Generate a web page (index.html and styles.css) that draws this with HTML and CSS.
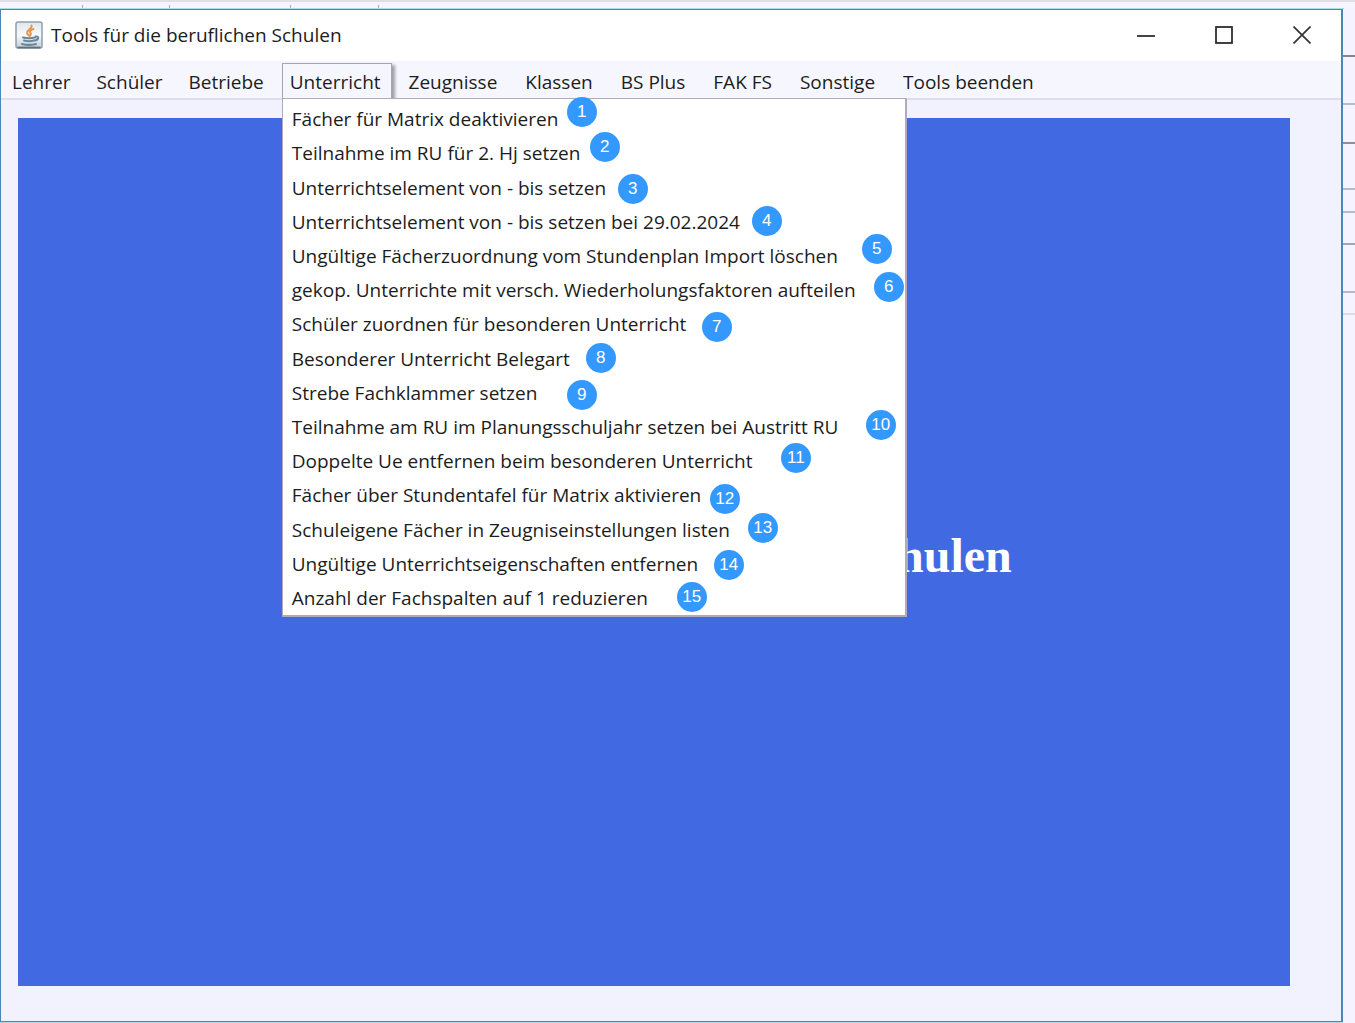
FILE: index.html
```html
<!DOCTYPE html>
<html lang="de">
<head>
<meta charset="utf-8">
<title>Tools für die beruflichen Schulen</title>
<link rel="stylesheet" href="styles.css">
</head>
<body>
<div class="desktop">
  <div class="strip-top"></div>
  <main class="window">
    <header class="titlebar">
      <svg class="app-icon" viewBox="0 0 28 28" aria-hidden="true">
        <defs>
          <linearGradient id="tile" x1="0" y1="0" x2="0" y2="1">
            <stop offset="0" stop-color="#dfe6eb"/>
            <stop offset=".5" stop-color="#f8fafb"/>
            <stop offset="1" stop-color="#c3ced6"/>
          </linearGradient>
        </defs>
        <rect x="1" y="1" width="26" height="26" rx="2" fill="url(#tile)" stroke="#8fa0ac" stroke-width="1.5"/>
        <path d="M2.500 26.500h23" stroke="#5d7180" stroke-width="1.800"/>
        <path d="M16.500 4.500c1 3.500-5 4.500-4.500 7.500.3 1.500 2 2 2.500 3M18.500 8c-3 1-4.500 2.500-3 4 1 1.200.2 2-.8 3" fill="none" stroke="#e8964a" stroke-width="2" stroke-linecap="round"/>
        <path d="M8 16.500c3 .8 9 .8 12 0M9 19.500c3 .8 7 .8 10 0M7 23c4 1 10 1 14 0M20.500 15.500c4-.8 3.500 3.500-1 4" fill="none" stroke="#6b879b" stroke-width="2" stroke-linecap="round"/>
      </svg>
      <span class="title">Tools für die beruflichen Schulen</span>
      <button class="control" aria-label="Minimieren"><svg viewBox="0 0 18 18"><path d="M0 10h18" stroke="#444" stroke-width="2"/></svg></button>
      <button class="control" aria-label="Maximieren"><svg viewBox="0 0 18 18"><rect x="1" y="1" width="16" height="16" fill="none" stroke="#222" stroke-width="1.700"/></svg></button>
      <button class="control" aria-label="Schließen"><svg viewBox="0 0 18 18"><path d="M.5.5l17 17M17.500.5L.5 17.500" stroke="#333" stroke-width="1.700"/></svg></button>
    </header>
    <nav class="menubar">
      <button class="menu">Lehrer</button>
      <button class="menu">Schüler</button>
      <button class="menu">Betriebe</button>
      <div class="menu-open">
        <button class="menu active" aria-expanded="true">Unterricht</button>
        <div class="dropdown">
          <button class="entry">Fächer für Matrix deaktivieren</button>
          <button class="entry">Teilnahme im RU für 2. Hj setzen</button>
          <button class="entry">Unterrichtselement von - bis setzen</button>
          <button class="entry">Unterrichtselement von - bis setzen bei 29.02.2024</button>
          <button class="entry">Ungültige Fächerzuordnung vom Stundenplan Import löschen</button>
          <button class="entry">gekop. Unterrichte mit versch. Wiederholungsfaktoren aufteilen</button>
          <button class="entry">Schüler zuordnen für besonderen Unterricht</button>
          <button class="entry">Besonderer Unterricht Belegart</button>
          <button class="entry">Strebe Fachklammer setzen</button>
          <button class="entry">Teilnahme am RU im Planungsschuljahr setzen bei Austritt RU</button>
          <button class="entry">Doppelte Ue entfernen beim besonderen Unterricht</button>
          <button class="entry">Fächer über Stundentafel für Matrix aktivieren</button>
          <button class="entry">Schuleigene Fächer in Zeugniseinstellungen listen</button>
          <button class="entry">Ungültige Unterrichtseigenschaften entfernen</button>
          <button class="entry">Anzahl der Fachspalten auf 1 reduzieren</button>
          <span class="badge b1">1</span>
          <span class="badge b2">2</span>
          <span class="badge b3">3</span>
          <span class="badge b4">4</span>
          <span class="badge b5">5</span>
          <span class="badge b6">6</span>
          <span class="badge b7">7</span>
          <span class="badge b8">8</span>
          <span class="badge b9">9</span>
          <span class="badge b10">10</span>
          <span class="badge b11">11</span>
          <span class="badge b12">12</span>
          <span class="badge b13">13</span>
          <span class="badge b14">14</span>
          <span class="badge b15">15</span>
        </div>
      </div>
      <button class="menu">Zeugnisse</button>
      <button class="menu">Klassen</button>
      <button class="menu">BS Plus</button>
      <button class="menu">FAK FS</button>
      <button class="menu">Sonstige</button>
      <button class="menu">Tools beenden</button>
    </nav>
    <section class="content">
      <div class="panel"><h1>Tools für die beruflichen Schulen</h1></div>
    </section>
  </main>
  <div class="strip-right"></div>
</div>
</body>
</html>
```
FILE: styles.css
```css
* { box-sizing: border-box; }

body {
  margin: 0;
  background: #f4f3ff;
  color: #1c1c1c;
  font-family: "Open Sans", "Noto Sans", sans-serif;
}

button {
  margin: 0;
  border: 0;
  padding: 0;
  background: none;
  color: inherit;
  font: inherit;
}

.desktop {
  display: grid;
  grid-template: 9px 1fr / 1fr 12px;
  min-height: 100vh;
}

/* Edges of the application behind the window */
.strip-top {
  grid-column: 1 / -1;
  background:
    linear-gradient(#a9a9b4, #a9a9b4) 82px 5px / 1px 4px no-repeat,
    linear-gradient(#a9a9b4, #a9a9b4) 169px 5px / 1px 4px no-repeat,
    linear-gradient(#a9a9b4, #a9a9b4) 290px 5px / 1px 4px no-repeat,
    linear-gradient(#a9a9b4, #a9a9b4) 378px 5px / 1px 4px no-repeat,
    linear-gradient(#dedde8, #dedde8) 0 0 / 100% 2px no-repeat,
    #f6f5ff;
}

.strip-right {
  background:
    linear-gradient(#85858f, #85858f) 0 46px / 100% 2px no-repeat,
    linear-gradient(#b5bace, #b5bace) 0 94px / 100% 2px no-repeat,
    linear-gradient(#8f8f99, #8f8f99) 0 133px / 100% 2px no-repeat,
    linear-gradient(#b5bace, #b5bace) 0 179px / 100% 2px no-repeat,
    linear-gradient(#b5bace, #b5bace) 0 202px / 100% 2px no-repeat,
    linear-gradient(#a2a7bb, #a2a7bb) 0 234px / 100% 2px no-repeat,
    linear-gradient(#b9b9c6, #b9b9c6) 0 282px / 100% 2px no-repeat,
    linear-gradient(#dddce8, #dddce8) 0 304px / 100% 2px no-repeat,
    #f4f3ff;
}

.window {
  display: flex;
  flex-direction: column;
  margin-bottom: 1px;
  border: 1px solid #4a86b8;
  border-right-width: 2px;
  background: #f2f2ff;
  box-shadow: 0 0 0 1px #a8dcea;
}

.titlebar {
  display: flex;
  align-items: center;
  height: 51px;
  padding: 0 0 2px 14px;
  background: #fff;
  font-size: 19px;
}

.app-icon { width: 28px; height: 28px; }

.title { flex: 1; margin-left: 8px; }

.control {
  display: grid;
  place-items: center;
  width: 78px;
  height: 48px;
}

.control svg { width: 18px; height: 18px; }

.menubar {
  display: flex;
  gap: 7px;
  height: 39px;
  padding: 2px 0 0 3px;
  border-bottom: 2px solid #dfdeea;
  background: #f6f7fe;
  font-size: 19px;
}

.menu {
  height: 36px;
  padding: 0 10px 0 7px;
  border: 1px solid transparent;
  line-height: 36px;
  white-space: nowrap;
}

.menu.active {
  border-color: #a5a4b0;
  box-shadow: 3px 2px 3px #a09fa8;
}

.menu-open { position: relative; }

.menu-open ~ .menu { margin-left: 2px; }

.dropdown {
  position: absolute;
  z-index: 1;
  top: 35px;
  left: 0;
  display: flex;
  flex-direction: column;
  width: 625px;
  min-height: 519px;
  padding: 3px 0 0;
  border: 2px solid #adacb8;
  border-width: 1px 2px 2px 1px;
  background: #fff;
}

.entry {
  flex: 1;
  padding: 0 9px;
  text-align: left;
  white-space: nowrap;
}

.badge {
  position: absolute;
  width: 30px;
  height: 30px;
  border-radius: 50%;
  background: #3399ff;
  color: #fff;
  font: 17px/30px "Liberation Sans", sans-serif;
  text-align: center;
}

.b1 { left: 284px; top: -2px; }
.b2 { left: 307px; top: 33px; }
.b3 { left: 335px; top: 75px; }
.b4 { left: 469px; top: 107px; }
.b5 { left: 579px; top: 135px; }
.b6 { left: 591px; top: 173px; }
.b7 { left: 419px; top: 213px; }
.b8 { left: 303px; top: 244px; }
.b9 { left: 284px; top: 281px; }
.b10 { left: 583px; top: 311px; }
.b11 { left: 498px; top: 344px; }
.b12 { left: 427px; top: 385px; }
.b13 { left: 465px; top: 414px; }
.b14 { left: 431px; top: 451px; }
.b15 { left: 394px; top: 483px; }

.content {
  display: flex;
  flex: 1;
  padding: 18px 51px 35px 17px;
}

.panel {
  display: grid;
  flex: 1;
  place-items: center;
  padding: 8px 0 0 38px;
  background: #4169e1;
}

h1 {
  margin: 0;
  color: #fff;
  font: bold 48px/56px "Liberation Serif", serif;
}
```
